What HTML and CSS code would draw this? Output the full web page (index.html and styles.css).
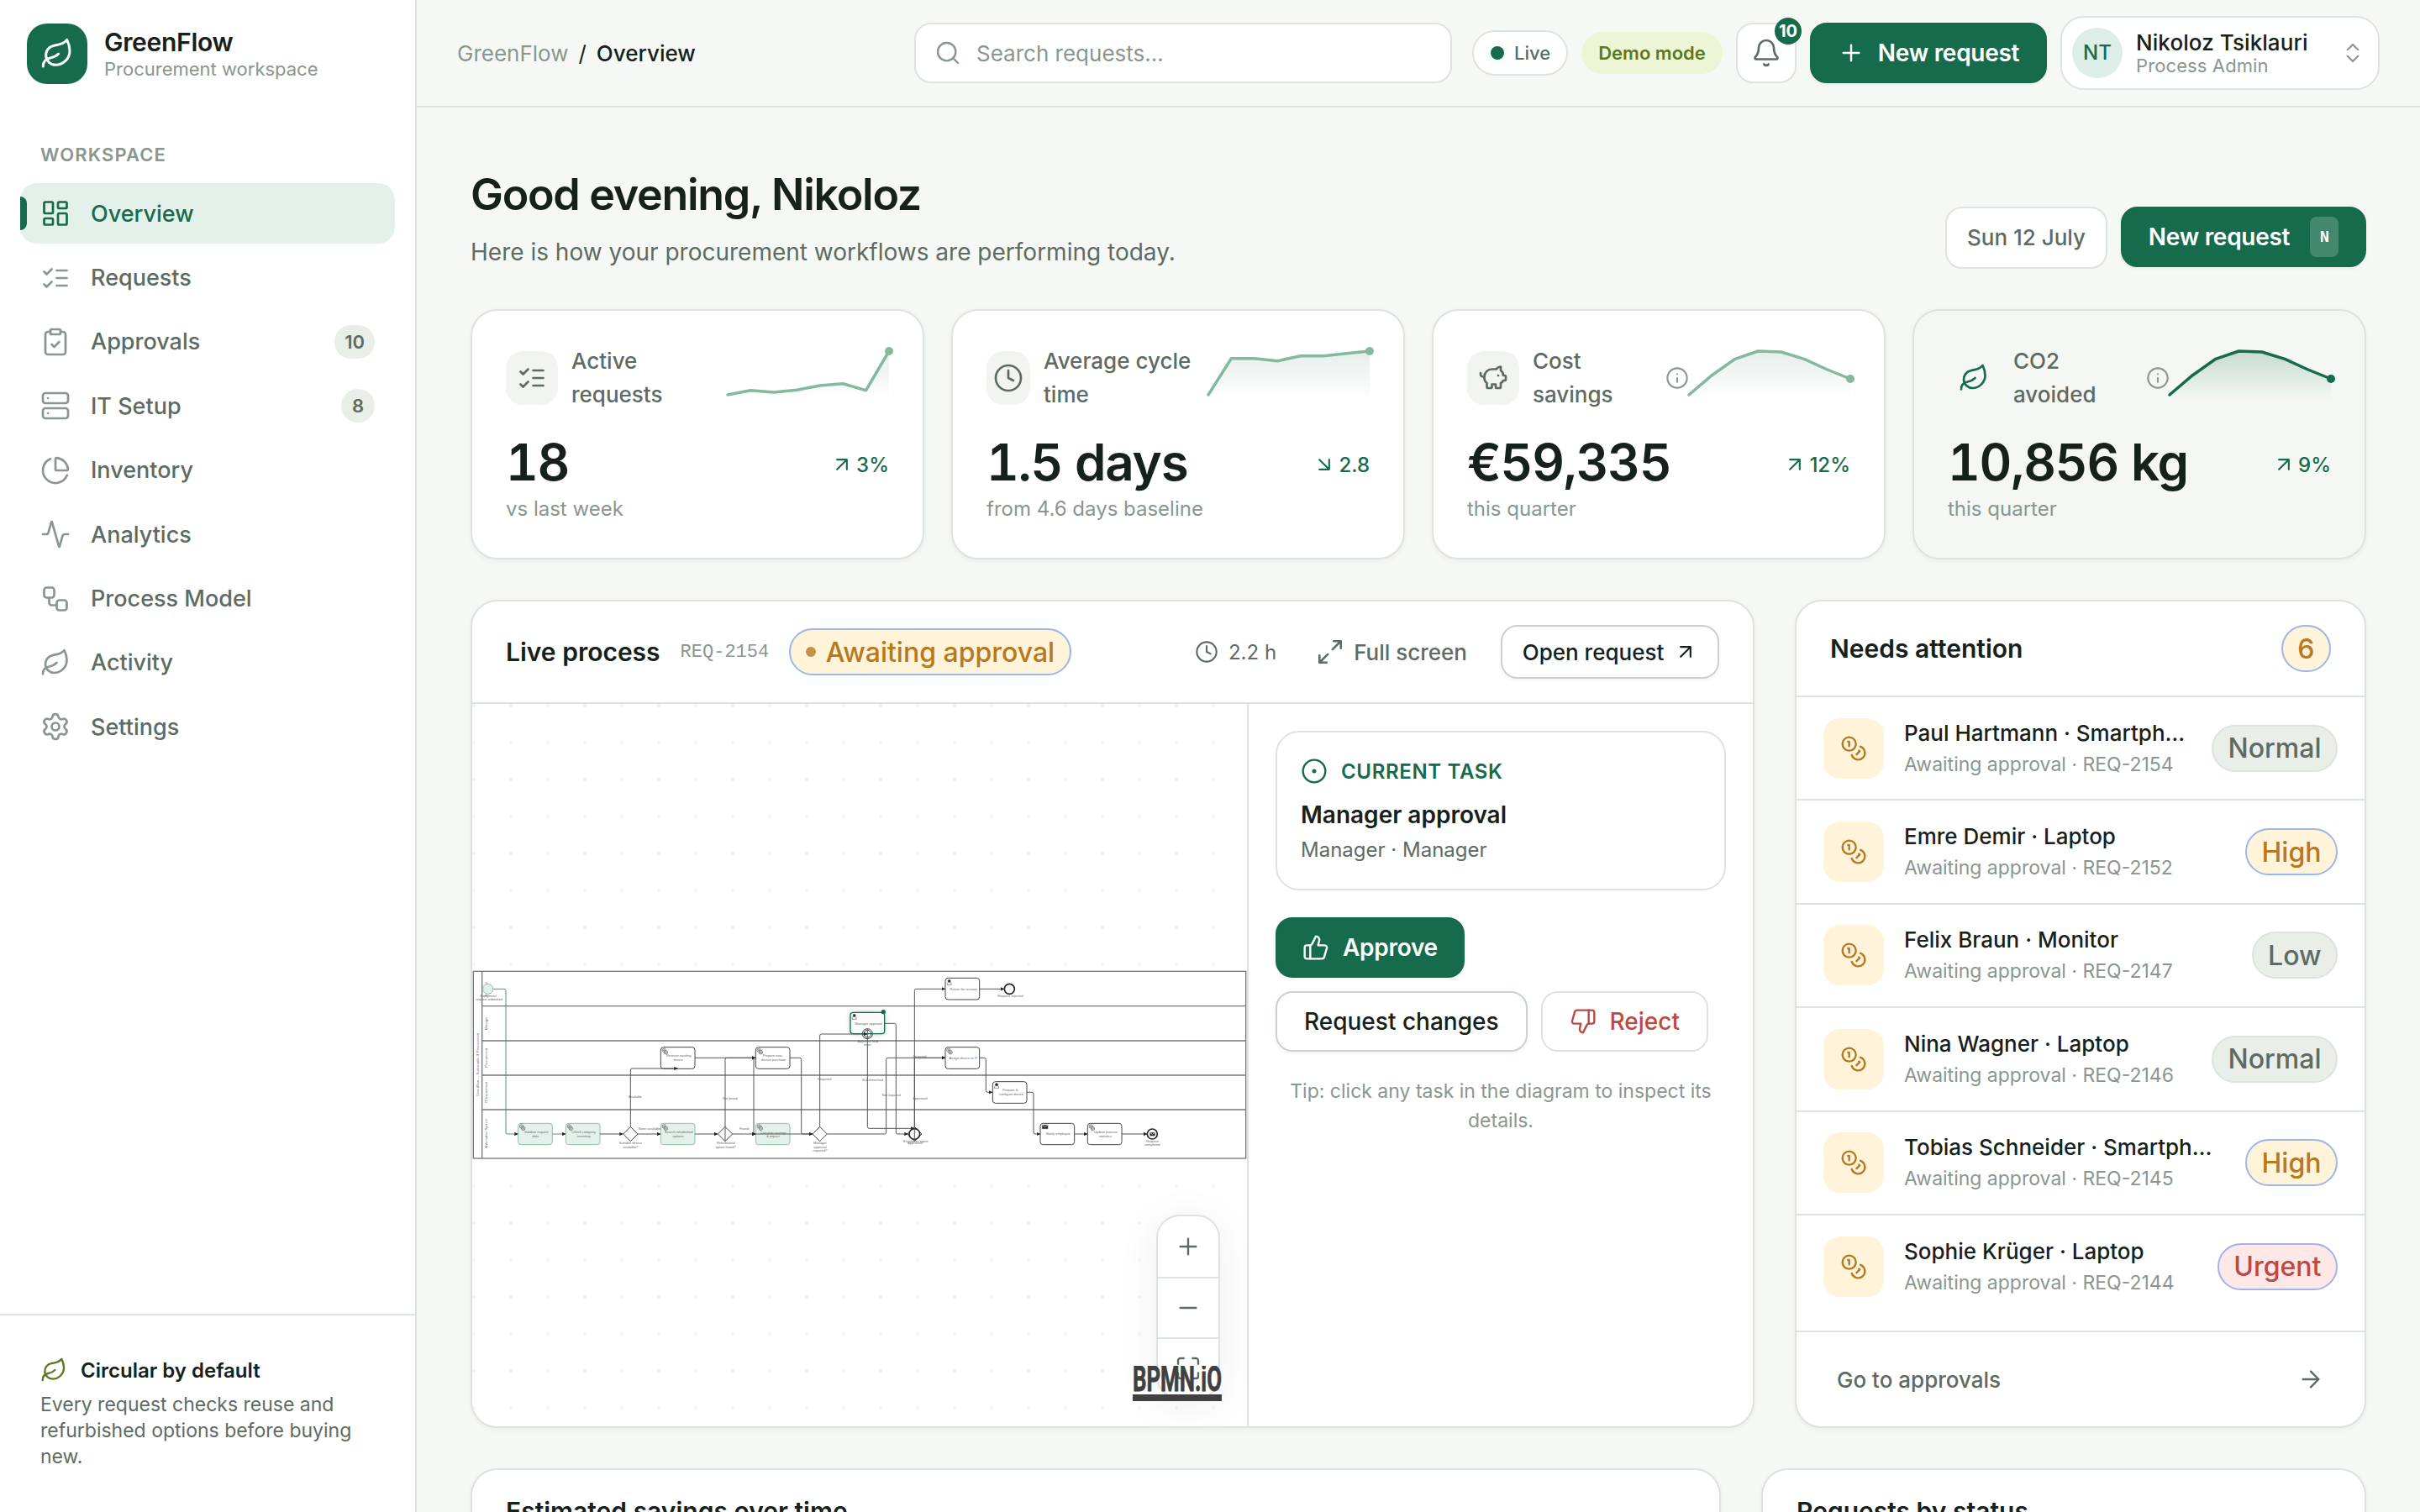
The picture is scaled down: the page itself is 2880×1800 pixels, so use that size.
FILE: index.html
```html
<!DOCTYPE html>
<html lang="en">
<head>
    <meta charset="UTF-8">
    <meta name="viewport" content="width=device-width, initial-scale=1.0">
    <title>GreenFlow - Overview</title>
    <link rel="stylesheet" href="styles.css">
</head>
<body>
    <svg class="sprite" xmlns="http://www.w3.org/2000/svg">
        <symbol id="leaf" viewBox="0 0 24 24"><path d="M11 20A7 7 0 0 1 9.8 6.1C15.5 5 17 4.48 19 2c1 2 2 4.18 2 8 0 5.5-4.78 10-10 10Z"/><path d="M2 21c0-3 1.85-5.36 5.08-6C9.5 14.52 12 13 13 12"/></symbol>
        <symbol id="dashboard" viewBox="0 0 24 24"><rect x="3" y="3" width="7" height="9" rx="1"/><rect x="14" y="3" width="7" height="5" rx="1"/><rect x="14" y="12" width="7" height="9" rx="1"/><rect x="3" y="16" width="7" height="5" rx="1"/></symbol>
        <symbol id="checks" viewBox="0 0 24 24"><path d="m3 17 2 2 4-4M3 7l2 2 4-4M13 6h8M13 12h8M13 18h8"/></symbol>
        <symbol id="clipboard" viewBox="0 0 24 24"><rect x="8" y="2" width="8" height="4" rx="1"/><path d="M16 4h2a2 2 0 0 1 2 2v14a2 2 0 0 1-2 2H6a2 2 0 0 1-2-2V6a2 2 0 0 1 2-2h2"/><path d="m9 14 2 2 4-4"/></symbol>
        <symbol id="server" viewBox="0 0 24 24"><rect x="2" y="2" width="20" height="8" rx="2"/><rect x="2" y="14" width="20" height="8" rx="2"/><path d="M6 6h.01M6 18h.01"/></symbol>
        <symbol id="pie" viewBox="0 0 24 24"><path d="M21 12c.552 0 1.005-.449.95-.998a10 10 0 0 0-8.953-8.951c-.55-.055-.998.398-.998.95v8a1 1 0 0 0 1 1z"/><path d="M21.21 15.89A10 10 0 1 1 8 2.83"/></symbol>
        <symbol id="pulse" viewBox="0 0 24 24"><path d="M22 12h-2.48a2 2 0 0 0-1.93 1.46l-2.35 8.36a.25.25 0 0 1-.48 0L9.24 2.18a.25.25 0 0 0-.48 0l-2.35 8.36A2 2 0 0 1 4.49 12H2"/></symbol>
        <symbol id="workflow" viewBox="0 0 24 24"><rect x="3" y="3" width="8" height="8" rx="2"/><path d="M7 11v4a2 2 0 0 0 2 2h4"/><rect x="13" y="13" width="8" height="8" rx="2"/></symbol>
        <symbol id="gear" viewBox="0 0 24 24"><path d="M9.671 4.136a2.34 2.34 0 0 1 4.659 0 2.34 2.34 0 0 0 3.319 1.915 2.34 2.34 0 0 1 2.33 4.033 2.34 2.34 0 0 0 0 3.831 2.34 2.34 0 0 1-2.33 4.033 2.34 2.34 0 0 0-3.319 1.915 2.34 2.34 0 0 1-4.659 0 2.34 2.34 0 0 0-3.32-1.915 2.34 2.34 0 0 1-2.33-4.033 2.34 2.34 0 0 0 0-3.831A2.34 2.34 0 0 1 6.35 6.051a2.34 2.34 0 0 0 3.319-1.915"/><circle cx="12" cy="12" r="3"/></symbol>
        <symbol id="search" viewBox="0 0 24 24"><circle cx="11" cy="11" r="8"/><path d="m21 21-4.34-4.34"/></symbol>
        <symbol id="bell" viewBox="0 0 24 24"><path d="M10.268 21a2 2 0 0 0 3.464 0"/><path d="M3.262 15.326A1 1 0 0 0 4 17h16a1 1 0 0 0 .74-1.673C19.41 13.956 18 12.499 18 8A6 6 0 0 0 6 8c0 4.499-1.411 5.956-2.738 7.326"/></symbol>
        <symbol id="plus" viewBox="0 0 24 24"><path d="M5 12h14M12 5v14"/></symbol>
        <symbol id="minus" viewBox="0 0 24 24"><path d="M5 12h14"/></symbol>
        <symbol id="updown" viewBox="0 0 24 24"><path d="m7 15 5 5 5-5M7 9l5-5 5 5"/></symbol>
        <symbol id="clock" viewBox="0 0 24 24"><circle cx="12" cy="12" r="10"/><path d="M12 6v6l4 2"/></symbol>
        <symbol id="piggy" viewBox="0 0 24 24"><path d="M11 17h3v2a1 1 0 0 0 1 1h2a1 1 0 0 0 1-1v-3a3.16 3.16 0 0 0 2-2h1a1 1 0 0 0 1-1v-2a1 1 0 0 0-1-1h-1a5 5 0 0 0-2-4V3a4 4 0 0 0-3.2 1.6l-.3.4H11a6 6 0 0 0-6 6v1a5 5 0 0 0 2 4v3a1 1 0 0 0 1 1h2a1 1 0 0 0 1-1z"/><path d="M16 10h.01M2 8v1a2 2 0 0 0 2 2h1"/></symbol>
        <symbol id="info" viewBox="0 0 24 24"><circle cx="12" cy="12" r="10"/><path d="M12 16v-4M12 8h.01"/></symbol>
        <symbol id="up-right" viewBox="0 0 24 24"><path d="M7 7h10v10M7 17 17 7"/></symbol>
        <symbol id="down-right" viewBox="0 0 24 24"><path d="m7 7 10 10M17 7v10H7"/></symbol>
        <symbol id="expand" viewBox="0 0 24 24"><path d="M15 3h6v6M21 3l-7 7M3 21l7-7M9 21H3v-6"/></symbol>
        <symbol id="fit" viewBox="0 0 24 24"><path d="M8 3H5a2 2 0 0 0-2 2v3M21 8V5a2 2 0 0 0-2-2h-3M3 16v3a2 2 0 0 0 2 2h3M16 21h3a2 2 0 0 0 2-2v-3"/></symbol>
        <symbol id="target" viewBox="0 0 24 24"><circle cx="12" cy="12" r="10"/><circle cx="12" cy="12" r="1"/></symbol>
        <symbol id="thumb-up" viewBox="0 0 24 24"><path d="M7 10v12"/><path d="M15 5.88 14 10h5.83a2 2 0 0 1 1.92 2.56l-2.33 8A2 2 0 0 1 17.5 22H4a2 2 0 0 1-2-2v-8a2 2 0 0 1 2-2h2.76a2 2 0 0 0 1.79-1.11L12 2a3.13 3.13 0 0 1 3 3.88Z"/></symbol>
        <symbol id="thumb-down" viewBox="0 0 24 24"><path d="M17 14V2"/><path d="M9 18.12 10 14H4.17a2 2 0 0 1-1.92-2.56l2.33-8A2 2 0 0 1 6.5 2H20a2 2 0 0 1 2 2v8a2 2 0 0 1-2 2h-2.76a2 2 0 0 0-1.79 1.11L12 22a3.13 3.13 0 0 1-3-3.88Z"/></symbol>
        <symbol id="coins" viewBox="0 0 24 24"><circle cx="8" cy="8" r="6"/><path d="M18.09 10.37A6 6 0 1 1 10.34 18M7 6h1v4M16.71 13.88l.7.71-2.82 2.82"/></symbol>
        <symbol id="arrow-right" viewBox="0 0 24 24"><path d="M5 12h14M12 5l7 7-7 7"/></symbol>
        <symbol id="service" viewBox="0 0 24 24"><g fill="#fff"><circle cx="9" cy="8" r="6"/><circle cx="9" cy="8" r="2"/><circle cx="15" cy="15" r="6"/><circle cx="15" cy="15" r="2.5"/></g></symbol>
        <symbol id="person" viewBox="0 0 24 24"><path d="M4 22v-6c0-2 3-4 5-4h6c2 0 5 2 5 4v6z" fill="#fff"/><circle cx="12" cy="7" r="5" fill="#22242a"/></symbol>
    </svg>

    <aside class="sidebar">
        <div class="brand">
            <div class="brand-mark"><svg class="icon i-40"><use href="#leaf"/></svg></div>
            <div>
                <div class="brand-name">GreenFlow</div>
                <div class="brand-sub">Procurement workspace</div>
            </div>
        </div>
        <nav class="nav">
            <div class="nav-title">WORKSPACE</div>
            <a class="nav-item active"><svg class="icon i-36"><use href="#dashboard"/></svg><span>Overview</span></a>
            <a class="nav-item"><svg class="icon i-36"><use href="#checks"/></svg><span>Requests</span></a>
            <a class="nav-item"><svg class="icon i-36"><use href="#clipboard"/></svg><span>Approvals</span><b class="count">10</b></a>
            <a class="nav-item"><svg class="icon i-36"><use href="#server"/></svg><span>IT Setup</span><b class="count">8</b></a>
            <a class="nav-item"><svg class="icon i-36"><use href="#pie"/></svg><span>Inventory</span></a>
            <a class="nav-item"><svg class="icon i-36"><use href="#pulse"/></svg><span>Analytics</span></a>
            <a class="nav-item"><svg class="icon i-36"><use href="#workflow"/></svg><span>Process Model</span></a>
            <a class="nav-item"><svg class="icon i-36"><use href="#leaf"/></svg><span>Activity</span></a>
            <a class="nav-item"><svg class="icon i-36"><use href="#gear"/></svg><span>Settings</span></a>
        </nav>
        <div class="side-note">
            <div class="side-note-title"><svg class="icon i-32"><use href="#leaf"/></svg>Circular by default</div>
            <p>Every request checks reuse and refurbished options before buying new.</p>
        </div>
    </aside>

    <div class="page">
        <header class="topbar">
            <div class="crumbs"><span>GreenFlow</span><i>/</i><b>Overview</b></div>
            <div class="search"><svg class="icon i-32"><use href="#search"/></svg>Search requests...</div>
            <div class="live"><span class="live-dot"></span>Live</div>
            <div class="demo">Demo mode</div>
            <div class="bell"><svg class="icon i-36"><use href="#bell"/></svg><span class="bell-count">10</span></div>
            <button class="btn primary top-new"><svg class="icon i-32"><use href="#plus"/></svg>New request</button>
            <div class="user">
                <div class="avatar">NT</div>
                <div class="user-text">
                    <div class="user-name">Nikoloz Tsiklauri</div>
                    <div class="user-role">Process Admin</div>
                </div>
                <svg class="icon i-30"><use href="#updown"/></svg>
            </div>
        </header>

        <main class="content">
            <section class="hero">
                <div>
                    <h1>Good evening, Nikoloz</h1>
                    <p>Here is how your procurement workflows are performing today.</p>
                </div>
                <div class="hero-actions">
                    <div class="date">Sun 12 July</div>
                    <button class="btn primary hero-new">New request <kbd>N</kbd></button>
                </div>
            </section>

            <section class="stats">
                <div class="card stat">
                    <div class="stat-head">
                        <div class="stat-icon"><svg class="icon i-36"><use href="#checks"/></svg></div>
                        <div class="stat-label">Active requests</div>
                        <svg class="spark" viewBox="0 0 200 70">
                            <defs><linearGradient id="fade" x1="0" y1="0" x2="0" y2="1"><stop offset="0" stop-color="#176b4d" stop-opacity=".11"/><stop offset="1" stop-color="#176b4d" stop-opacity="0"/></linearGradient></defs>
                            <path class="area" d="M8 55L35.4 49.7L62.9 52L90.3 49.3L117.7 44L145.1 41.7L172.6 49.7L200 3V61H8Z"/>
                            <path class="line" d="M8 55L35.4 49.7L62.9 52L90.3 49.3L117.7 44L145.1 41.7L172.6 49.7L200 3"/>
                            <circle cx="200" cy="3" r="5"/>
                        </svg>
                    </div>
                    <div class="stat-row"><div class="stat-value">18</div><div class="delta"><svg class="icon i-28"><use href="#up-right"/></svg>3%</div></div>
                    <div class="stat-foot">vs last week</div>
                </div>
                <div class="card stat">
                    <div class="stat-head">
                        <div class="stat-icon narrow"><svg class="icon i-36"><use href="#clock"/></svg></div>
                        <div class="stat-label">Average cycle time</div>
                        <svg class="spark" viewBox="0 0 200 70">
                            <path class="area" d="M8 55L35.4 11.7L62.9 11.7L90.3 14.7L117.7 8.7L145.1 8.7L172.6 5.7L200 3V61H8Z"/>
                            <path class="line" d="M8 55L35.4 11.7L62.9 11.7L90.3 14.7L117.7 8.7L145.1 8.7L172.6 5.7L200 3"/>
                            <circle cx="200" cy="3" r="5"/>
                        </svg>
                    </div>
                    <div class="stat-row"><div class="stat-value">1.5 days</div><div class="delta"><svg class="icon i-28"><use href="#down-right"/></svg>2.8</div></div>
                    <div class="stat-foot">from 4.6 days baseline</div>
                </div>
                <div class="card stat">
                    <div class="stat-head">
                        <div class="stat-icon"><svg class="icon i-36"><use href="#piggy"/></svg></div>
                        <div class="stat-label">Cost savings</div>
                        <svg class="icon i-28 info"><use href="#info"/></svg>
                        <svg class="spark" viewBox="0 0 200 70">
                            <path class="area" d="M8 55L35.4 31.7L62.9 12.3L90.3 3L117.7 4L145.1 12.3L172.6 25L200 36V61H8Z"/>
                            <path class="line" d="M8 55L35.4 31.7L62.9 12.3L90.3 3L117.7 4L145.1 12.3L172.6 25L200 36"/>
                            <circle cx="200" cy="36" r="5"/>
                        </svg>
                    </div>
                    <div class="stat-row"><div class="stat-value">€59,335</div><div class="delta"><svg class="icon i-28"><use href="#up-right"/></svg>12%</div></div>
                    <div class="stat-foot">this quarter</div>
                </div>
                <div class="card stat eco">
                    <div class="stat-head">
                        <div class="stat-icon"><svg class="icon i-36"><use href="#leaf"/></svg></div>
                        <div class="stat-label">CO2 avoided</div>
                        <svg class="icon i-28 info"><use href="#info"/></svg>
                        <svg class="spark" viewBox="0 0 200 70">
                            <defs><linearGradient id="fade-eco" x1="0" y1="0" x2="0" y2="1"><stop offset="0" stop-color="#176b4d" stop-opacity=".2"/><stop offset="1" stop-color="#176b4d" stop-opacity="0"/></linearGradient></defs>
                            <path class="area" d="M8 55L35.4 31.7L62.9 12.3L90.3 3L117.7 4L145.1 12.3L172.6 25L200 36V61H8Z"/>
                            <path class="line" d="M8 55L35.4 31.7L62.9 12.3L90.3 3L117.7 4L145.1 12.3L172.6 25L200 36"/>
                            <circle cx="200" cy="36" r="5"/>
                        </svg>
                    </div>
                    <div class="stat-row"><div class="stat-value">10,856 kg</div><div class="delta"><svg class="icon i-28"><use href="#up-right"/></svg>9%</div></div>
                    <div class="stat-foot">this quarter</div>
                </div>
            </section>

            <section class="middle">
                <div class="card live-card">
                    <div class="live-head">
                        <h2>Live process</h2>
                        <code>REQ-2154</code>
                        <span class="pill amber"><i class="pill-dot"></i>Awaiting approval</span>
                        <span class="age"><svg class="icon i-28"><use href="#clock"/></svg>2.2 h</span>
                        <span class="full"><svg class="icon i-34"><use href="#expand"/></svg>Full screen</span>
                        <button class="btn open">Open request<svg class="icon i-28"><use href="#up-right"/></svg></button>
                    </div>
                    <div class="live-body">
                        <div class="canvas">
                            <svg class="bpmn" viewBox="36 30 2766 708">
                                <defs>
                                    <marker id="tip" viewBox="0 0 12 12" refX="12" refY="6" markerWidth="13" markerHeight="13" markerUnits="userSpaceOnUse" orient="auto"><path d="M0 0L12 6L0 12Z" fill="#22242a"/></marker>
                                </defs>
                                <g class="lanes">
                                    <rect x="40" y="49" width="2758" height="668"/>
                                    <path d="M71 49V717M71 173H2798M71 297H2798M71 420H2798M71 543H2798"/>
                                </g>
                                <g class="vlabels">
                                    <text transform="translate(60 383) rotate(-90)">GreenFlow — Sustainable IT Procurement</text>
                                    <text transform="translate(90 112) rotate(-90)">Employee</text>
                                    <text transform="translate(90 235) rotate(-90)">Manager</text>
                                    <text transform="translate(90 358) rotate(-90)">Procurement</text>
                                    <text transform="translate(90 481) rotate(-90)">IT Department</text>
                                    <text transform="translate(90 628) rotate(-90)">Automation System</text>
                                </g>
                                <g class="shape done">
                                    <circle cx="92" cy="112" r="18"/>
                                    <rect x="200" y="592" width="122" height="76" rx="10"/>
                                    <rect x="370" y="592" width="122" height="76" rx="10"/>
                                    <rect x="709" y="592" width="122" height="76" rx="10"/>
                                    <rect x="1048" y="592" width="122" height="76" rx="10"/>
                                </g>
                                <rect class="glow" x="1386" y="196" width="122" height="76" rx="10"/>
                                <g class="shape">
                                    <rect x="709" y="320" width="122" height="77" rx="10"/>
                                    <rect x="1048" y="320" width="122" height="77" rx="10"/>
                                    <rect x="1725" y="73" width="122" height="77" rx="10"/>
                                    <rect x="1725" y="320" width="122" height="77" rx="10"/>
                                    <rect x="1894" y="443" width="122" height="77" rx="10"/>
                                    <rect x="2064" y="592" width="122" height="76" rx="10"/>
                                    <rect x="2233" y="592" width="122" height="76" rx="10"/>
                                    <path d="M575 630L601 604L627 630L601 656ZM913 630L939 604L965 630L939 656ZM1251 630L1277 604L1303 630L1277 656ZM1589 630L1615 604L1641 630L1615 656Z"/>
                                    <circle cx="1447" cy="272" r="18"/><circle cx="1447" cy="272" r="13"/>
                                    <circle class="end" cx="1954" cy="112" r="18"/>
                                    <circle class="end" cx="1615" cy="630" r="19"/>
                                    <circle class="end" cx="2464" cy="630" r="18"/>
                                </g>
                                <rect class="current" x="1386" y="196" width="122" height="76" rx="10"/>
                                <circle cx="1504" cy="194" r="8" fill="#176b4d"/>
                                <g class="flow past">
                                    <path d="M111 112H150Q156 112 156 118V624Q156 630 162 630H200"/>
                                    <path d="M323 630H370"/>
                                </g>
                                <g class="flow">
                                    <path d="M492 630H575"/>
                                    <path d="M627 630H709"/>
                                    <path d="M601 604V402Q601 396 607 396H770"/>
                                    <path d="M831 358H1048"/>
                                    <path d="M831 630H913"/>
                                    <path d="M939 656V364Q939 358 945 358H1048"/>
                                    <path d="M1041 358V630H1048"/>
                                    <path d="M965 630H1048"/>
                                    <path d="M1048 630H1251"/>
                                    <path d="M1170 358H1205Q1211 358 1211 364V624Q1211 630 1217 630H1251"/>
                                    <path d="M1277 604V279Q1277 273 1283 273H1447"/>
                                    <path d="M1303 630H1508Q1514 630 1514 624V364Q1514 358 1520 358H1725"/>
                                    <path d="M1508 235H1543Q1549 235 1549 241V624Q1549 630 1555 630H1592"/>
                                    <path d="M1447 254V604Q1447 610 1453 610H1615"/>
                                    <path d="M1615 656V118Q1615 112 1621 112H1725"/>
                                    <path d="M1615 604V358H1725"/>
                                    <path d="M1847 112H1936"/>
                                    <path d="M1847 358H1864Q1870 358 1870 364V475Q1870 481 1876 481H1894"/>
                                    <path d="M2016 481H2034Q2040 481 2040 487V624Q2040 630 2046 630H2064"/>
                                    <path d="M2186 630H2233"/>
                                    <path d="M2355 630H2446"/>
                                </g>
                                <g class="marks">
                                    <use href="#service" x="202" y="594" width="26" height="26"/>
                                    <use href="#service" x="372" y="594" width="26" height="26"/>
                                    <use href="#service" x="711" y="594" width="26" height="26"/>
                                    <use href="#service" x="1050" y="594" width="26" height="26"/>
                                    <use href="#service" x="711" y="322" width="26" height="26"/>
                                    <use href="#service" x="1050" y="322" width="26" height="26"/>
                                    <use href="#service" x="1727" y="322" width="26" height="26"/>
                                    <use href="#service" x="2235" y="594" width="26" height="26"/>
                                    <use href="#person" x="1389" y="200" width="22" height="22"/>
                                    <use href="#person" x="1728" y="77" width="22" height="22"/>
                                    <use href="#person" x="1897" y="447" width="22" height="22"/>
                                    <path d="M2071 598h20v13h-20zM2456 625h17v11h-17z" fill="#22242a"/>
                                    <path d="m2071 598 10 7 10-7M2456 625l8.500 6 8.500-6" stroke="#fff"/>
                                </g>
                                <g class="labels">
                                    <text x="94" y="141">Equipment</text><text x="96" y="153">request submitted</text>
                                    <text x="265" y="627">Validate request</text><text x="262" y="641">data</text>
                                    <text x="434" y="627">Check company</text><text x="434" y="641">inventory</text>
                                    <text x="601" y="666">Suitable device</text><text x="601" y="681">available?</text>
                                    <text x="669" y="615">None available</text>
                                    <text x="773" y="627">Search refurbished</text><text x="771" y="641">options</text>
                                    <text x="773" y="354">Reserve existing</text><text x="771" y="369">device</text>
                                    <text x="618" y="501">Available</text>
                                    <text x="957" y="507">Not found</text>
                                    <text x="1007" y="615">Found</text>
                                    <text x="941" y="666">Refurbished</text><text x="941" y="681">option found?</text>
                                    <text x="1109" y="354">Prepare new-</text><text x="1112" y="369">device purchase</text>
                                    <text x="1110" y="629">Calculate savings</text><text x="1110" y="642">&amp; impact</text>
                                    <text x="1278" y="666">Manager</text><text x="1278" y="681">approval</text><text x="1278" y="693">required?</text>
                                    <text x="1294" y="438">Required</text>
                                    <text x="1451" y="240">Manager approval</text>
                                    <text x="1449" y="302">Approval SLA</text><text x="1447" y="315">timer</text>
                                    <text x="1465" y="441">SLA breached</text>
                                    <text x="1532" y="495">Not required</text>
                                    <text x="1633" y="357">Rejected</text>
                                    <text x="1635" y="507">Approved</text>
                                    <text x="1619" y="660">Escalation event</text><text x="1619" y="665">Approved?</text>
                                    <text x="1790" y="117">Return for revision</text>
                                    <text x="1957" y="141">Request rejected</text>
                                    <text x="1789" y="363">Assign device to IT</text>
                                    <text x="1957" y="477">Prepare &amp;</text><text x="1960" y="492">configure device</text>
                                    <text x="2128" y="633">Notify employee</text>
                                    <text x="2298" y="627">Update process</text><text x="2296" y="641">statistics</text>
                                    <text x="2464" y="660">Request</text><text x="2464" y="672">completed</text>
                                </g>
                            </svg>
                            <div class="zoom">
                                <button><svg class="icon i-32"><use href="#plus"/></svg></button>
                                <button><svg class="icon i-32"><use href="#minus"/></svg></button>
                                <button><svg class="icon i-32"><use href="#fit"/></svg></button>
                            </div>
                            <svg class="bpmn-logo" viewBox="0 0 106 42">
                                <text x="0" y="30" textLength="106" lengthAdjust="spacingAndGlyphs">BPMN.iO</text>
                                <rect y="34" width="106" height="8"/>
                            </svg>
                        </div>
                        <div class="task-side">
                            <div class="task">
                                <div class="task-tag"><svg class="icon i-32"><use href="#target"/></svg>CURRENT TASK</div>
                                <div class="task-name">Manager approval</div>
                                <div class="task-who">Manager · Manager</div>
                            </div>
                            <div class="task-actions">
                                <button class="btn primary"><svg class="icon i-32"><use href="#thumb-up"/></svg>Approve</button>
                                <button class="btn">Request changes</button>
                                <button class="btn danger"><svg class="icon i-32"><use href="#thumb-down"/></svg>Reject</button>
                            </div>
                            <p class="tip">Tip: click any task in the diagram to inspect its details.</p>
                        </div>
                    </div>
                </div>

                <div class="card attention">
                    <div class="att-head"><h2>Needs attention</h2><span class="pill amber">6</span></div>
                    <div class="att-list">
                        <div class="att-row"><div class="att-icon"><svg class="icon i-32"><use href="#coins"/></svg></div><div class="att-text"><div class="att-name">Paul Hartmann · Smartphone</div><div class="att-sub">Awaiting approval · REQ-2154</div></div><span class="pill">Normal</span></div>
                        <div class="att-row"><div class="att-icon"><svg class="icon i-32"><use href="#coins"/></svg></div><div class="att-text"><div class="att-name">Emre Demir · Laptop</div><div class="att-sub">Awaiting approval · REQ-2152</div></div><span class="pill amber">High</span></div>
                        <div class="att-row"><div class="att-icon"><svg class="icon i-32"><use href="#coins"/></svg></div><div class="att-text"><div class="att-name">Felix Braun · Monitor</div><div class="att-sub">Awaiting approval · REQ-2147</div></div><span class="pill">Low</span></div>
                        <div class="att-row"><div class="att-icon"><svg class="icon i-32"><use href="#coins"/></svg></div><div class="att-text"><div class="att-name">Nina Wagner · Laptop</div><div class="att-sub">Awaiting approval · REQ-2146</div></div><span class="pill">Normal</span></div>
                        <div class="att-row"><div class="att-icon"><svg class="icon i-32"><use href="#coins"/></svg></div><div class="att-text"><div class="att-name">Tobias Schneider · Smartphone</div><div class="att-sub">Awaiting approval · REQ-2145</div></div><span class="pill amber">High</span></div>
                        <div class="att-row"><div class="att-icon"><svg class="icon i-32"><use href="#coins"/></svg></div><div class="att-text"><div class="att-name">Sophie Krüger · Laptop</div><div class="att-sub">Awaiting approval · REQ-2144</div></div><span class="pill red">Urgent</span></div>
                    </div>
                    <div class="att-foot">Go to approvals<svg class="icon i-32"><use href="#arrow-right"/></svg></div>
                </div>
            </section>

            <section class="bottom">
                <div class="card chart-card"><h2>Estimated savings over time</h2></div>
                <div class="card chart-card"><h2>Requests by status</h2></div>
            </section>
        </main>
    </div>
</body>
</html>
```

FILE: styles.css
```css
* {
    box-sizing: border-box;
}
body {
    margin: 0;
    width: 2880px;
    height: 1800px;
    overflow: hidden;
    display: flex;
    background: #f6f8f5;
    color: #16211c;
    font-family: Inter, "Liberation Sans", sans-serif;
    font-size: 26px;
}
h1, h2, p {
    margin: 0;
}
.sprite {
    display: none;
}
.icon {
    flex: none;
    fill: none;
    stroke: currentColor;
    stroke-width: 1.8;
    stroke-linecap: round;
    stroke-linejoin: round;
}
.i-28 { width: 28px; height: 28px; }
.i-30 { width: 30px; height: 30px; }
.i-32 { width: 32px; height: 32px; }
.i-34 { width: 34px; height: 34px; }
.i-36 { width: 36px; height: 36px; }
.i-40 { width: 40px; height: 40px; }

/* sidebar */
.sidebar {
    width: 496px;
    flex: none;
    display: flex;
    flex-direction: column;
    background: #fff;
    border-right: 2px solid #dde3de;
}
.brand {
    display: flex;
    align-items: center;
    gap: 20px;
    height: 128px;
    padding: 0 32px;
}
.brand-mark {
    width: 72px;
    height: 72px;
    display: flex;
    align-items: center;
    justify-content: center;
    border-radius: 24px;
    background: #176b4d;
    color: #fff;
}
.brand-name {
    font-size: 30px;
    line-height: 36px;
    font-weight: 600;
    letter-spacing: -0.01em;
}
.brand-sub {
    font-size: 22px;
    line-height: 28px;
    color: #8a968f;
}
.nav {
    flex: 1;
    display: flex;
    flex-direction: column;
    gap: 4px;
    padding: 40px 24px 0;
}
.nav-title {
    padding-left: 24px;
    height: 46px;
    line-height: 32px;
    font-size: 22px;
    font-weight: 600;
    letter-spacing: 0.05em;
    color: #8a968f;
}
.nav-item {
    position: relative;
    display: flex;
    align-items: center;
    gap: 24px;
    height: 72.4px;
    padding: 0 24px;
    border-radius: 20px;
    font-size: 27px;
    font-weight: 500;
    color: #5d6b63;
}
.nav-item .icon {
    color: #8a968f;
}
.nav-item.active,
.nav-item.active .icon {
    color: #176b4d;
}
.nav-item.active {
    background: #e4f1eb;
}
.nav-item.active::before {
    content: "";
    position: absolute;
    left: 0;
    top: 16px;
    width: 8px;
    height: 40px;
    border-radius: 0 8px 8px 0;
    background: #176b4d;
}
.count {
    margin-left: auto;
    min-width: 40px;
    height: 40px;
    line-height: 40px;
    padding: 0 12px;
    border-radius: 20px;
    background: #e9eee9;
    font-size: 22px;
    font-weight: 600;
    text-align: center;
}
.side-note {
    height: 236px;
    padding: 46px 40px 0 48px;
    border-top: 2px solid #dde3de;
    color: #5d6b63;
    font-size: 23px;
    line-height: 31px;
}
.side-note-title {
    display: flex;
    align-items: center;
    gap: 16px;
    height: 38px;
    margin-bottom: 7px;
    font-size: 24px;
    font-weight: 600;
    color: #16211c;
}
.side-note-title .icon {
    color: #5b7a1f;
}

/* top bar */
.page {
    flex: 1;
    min-width: 0;
    display: flex;
    flex-direction: column;
    overflow: hidden;
}
.topbar {
    height: 128px;
    flex: none;
    display: flex;
    align-items: center;
    gap: 16px;
    padding: 0 48px;
    border-bottom: 2px solid #dde3de;
}
.crumbs {
    display: flex;
    gap: 12px;
    margin-right: auto;
}
.crumbs span {
    color: #8a968f;
}
.crumbs i {
    font-style: normal;
}
.crumbs b {
    font-weight: 500;
}
.search {
    width: 640px;
    height: 72px;
    margin-right: 8px;
    display: flex;
    align-items: center;
    gap: 18px;
    padding: 0 22px;
    border: 2px solid #dde3de;
    border-radius: 20px;
    background: #fff;
    color: #8a968f;
}
.live {
    display: flex;
    align-items: center;
    gap: 12px;
    width: 114px;
    height: 54px;
    padding-left: 20px;
    border: 2px solid #dde3de;
    border-radius: 27px;
    background: #fff;
    font-size: 22px;
    font-weight: 500;
    color: #5d6b63;
}
.live-dot {
    width: 16px;
    height: 16px;
    border-radius: 50%;
    background: #176b4d;
    box-shadow: 0 0 0 6px rgba(23, 107, 77, 0.02);
}
.demo {
    width: 168px;
    height: 50px;
    line-height: 50px;
    border-radius: 25px;
    background: #ecf5d6;
    color: #5b7a1f;
    font-size: 22px;
    font-weight: 600;
    text-align: center;
}
.bell {
    position: relative;
    width: 72px;
    height: 72px;
    display: flex;
    align-items: center;
    justify-content: center;
    border: 2px solid #dde3de;
    border-radius: 20px;
    background: #fff;
    color: #5d6b63;
}
.bell-count {
    position: absolute;
    top: -8px;
    right: -8px;
    width: 32px;
    height: 32px;
    line-height: 32px;
    border-radius: 50%;
    background: #176b4d;
    color: #fff;
    font-size: 20px;
    font-weight: 700;
    text-align: center;
}
.btn {
    height: 72px;
    display: flex;
    align-items: center;
    justify-content: center;
    gap: 16px;
    padding: 0 32px;
    border: 2px solid #c9d2cb;
    border-radius: 20px;
    background: #fff;
    color: #16211c;
    font-family: inherit;
    font-size: 28px;
    font-weight: 500;
    white-space: nowrap;
    box-shadow: 0 2px 4px rgba(22, 33, 28, 0.05);
}
.btn.primary {
    padding: 0 30px;
    border-color: #176b4d;
    background: #176b4d;
    color: #fff;
    font-weight: 600;
    letter-spacing: -0.01em;
}
.btn.danger {
    border-color: #dde3de;
    color: #bd4844;
    box-shadow: none;
}
.top-new {
    width: 282px;
}
.user {
    width: 380px;
    height: 88px;
    display: flex;
    align-items: center;
    gap: 16px;
    padding: 0 15px 0 12px;
    border: 2px solid #dde3de;
    border-radius: 28px;
    background: #fff;
}
.user .icon {
    color: #8a968f;
}
.user-text {
    flex: 1;
    padding-top: 1px;
}
.avatar {
    width: 60px;
    height: 60px;
    line-height: 60px;
    border-radius: 50%;
    background: #ddeee8;
    color: #176b4d;
    font-size: 24px;
    font-weight: 500;
    text-align: center;
}
.user-name {
    line-height: 28px;
    font-weight: 500;
    letter-spacing: 0.003em;
}
.user-role {
    font-size: 22px;
    line-height: 26px;
    letter-spacing: 0.005em;
    color: #8a968f;
}

/* content */
.content {
    padding: 72px 64px 0;
}
.hero {
    display: flex;
    justify-content: space-between;
    height: 168px;
}
.hero h1 {
    font-size: 52px;
    line-height: 64px;
    font-weight: 600;
    letter-spacing: -0.025em;
}
.hero p {
    margin-top: 16px;
    font-size: 28px;
    line-height: 40px;
    color: #5d6b63;
}
.hero-actions {
    display: flex;
    gap: 16px;
    align-items: flex-start;
    padding-top: 46px;
}
.date {
    width: 193px;
    height: 74px;
    line-height: 70px;
    border: 2px solid #dde3de;
    border-radius: 20px;
    background: #fff;
    color: #5d6b63;
    font-weight: 500;
    text-align: center;
}
.hero-new {
    width: 292px;
    gap: 24px;
}
.hero-new kbd {
    width: 34px;
    height: 48px;
    line-height: 48px;
    border-radius: 8px;
    background: rgba(255, 255, 255, 0.2);
    font-family: "DejaVu Sans Mono", monospace;
    font-size: 18px;
    font-weight: 700;
}
.card {
    border: 2px solid #dde3de;
    border-radius: 32px;
    background: #fff;
    box-shadow: 0 2px 6px rgba(22, 33, 28, 0.05);
}
.stats {
    display: grid;
    grid-template-columns: repeat(4, 1fr);
    gap: 32px;
}
.stat {
    height: 298px;
    padding: 40px;
}
.stat-head {
    display: flex;
    align-items: center;
    gap: 16px;
    height: 80px;
}
.stat-icon {
    width: 62px;
    height: 64px;
    flex: none;
    display: flex;
    align-items: center;
    justify-content: center;
    border-radius: 20px;
    background: #f1f4f1;
    color: #5d6b63;
}
.stat-icon.narrow {
    width: 52px;
}
.stat-label {
    flex: 1;
    line-height: 40px;
    font-weight: 500;
    color: #5d6b63;
}
.info {
    color: #8a968f;
    margin-right: -16px;
}
.spark {
    flex: none;
    width: 200px;
    height: 70px;
    margin-left: -8px;
    overflow: visible;
}
.area {
    fill: url(#fade);
}
.line {
    fill: none;
    stroke: #84b99f;
    stroke-width: 3.5;
    stroke-linejoin: round;
    stroke-linecap: round;
}
.spark circle {
    fill: #84b99f;
}
.eco {
    background: #f4f7f4;
}
.eco .stat-icon {
    background: none;
    color: #176b4d;
}
.eco .area {
    fill: url(#fade-eco);
}
.eco .line {
    stroke: #176b4d;
}
.eco .spark circle {
    fill: #176b4d;
}
.stat-row {
    display: flex;
    justify-content: space-between;
    align-items: center;
    height: 72px;
    margin-top: 24px;
}
.stat-value {
    font-size: 60px;
    line-height: 72px;
    font-weight: 600;
    font-variant-numeric: tabular-nums;
    letter-spacing: -0.02em;
}
.delta {
    display: flex;
    align-items: center;
    gap: 3px;
    padding-top: 6px;
    font-size: 24px;
    font-weight: 500;
    color: #176b4d;
}
.stat-foot {
    margin-top: 2px;
    font-size: 24px;
    line-height: 36px;
    color: #8a968f;
}

.middle {
    display: grid;
    grid-template-columns: 1528px 680px;
    gap: 48px;
    margin-top: 48px;
    height: 986px;
}
h2 {
    font-size: 30px;
    line-height: 40px;
    font-weight: 600;
}
.live-card {
    display: flex;
    flex-direction: column;
    overflow: hidden;
}
.live-head {
    height: 122px;
    display: flex;
    align-items: center;
    gap: 24px;
    padding: 0 40px;
    border-bottom: 2px solid #dde3de;
}
.live-head h2 {
    white-space: nowrap;
}
.live-head code {
    font-family: "Liberation Mono", monospace;
    font-size: 22px;
    color: #8a968f;
}
.pill {
    flex: none;
    height: 56px;
    display: inline-flex;
    align-items: center;
    padding: 0 17.5px;
    border: 2px solid #dde3de;
    border-radius: 28px;
    background: #e9eee9;
    color: #5d6b63;
    font-size: 32px;
    font-weight: 500;
}
.pill.amber {
    border-color: #9bb8e8;
    background: #fff3d9;
    color: #b87820;
}
.pill.red {
    border-color: #9fb4ea;
    background: #fde8e7;
    color: #bd4844;
}
.pill-dot {
    width: 12px;
    height: 12px;
    margin-right: 12px;
    border-radius: 50%;
    background: #c79145;
}
.age, .full {
    display: flex;
    align-items: center;
    gap: 11px;
    color: #5d6b63;
    white-space: nowrap;
}
.age {
    gap: 12px;
    margin-left: auto;
    font-size: 24px;
}
.full {
    margin: 0 16px 0 23px;
    font-weight: 500;
}
.btn.open {
    width: 260px;
    height: 64px;
    padding: 0;
    gap: 12px;
    font-size: 26px;
}
.live-body {
    flex: 1;
    display: flex;
    min-height: 0;
}
.canvas {
    position: relative;
    flex: 1;
    display: flex;
    align-items: center;
    background: radial-gradient(circle at 2px 2px, #f3f5f3 2px, transparent 2.5px) 0 0 / 44px 44px;
}

/* process diagram */
.bpmn {
    width: 922px;
    height: 236px;
}
.lanes rect, .lanes path {
    fill: none;
    stroke: #77787c;
    stroke-width: 4;
}
.lanes rect {
    fill: #fff;
}
.shape {
    fill: #fff;
    stroke: #44464c;
    stroke-width: 3;
}
.done {
    fill: #e4f1eb;
    stroke: #8cc2a8;
}
.end {
    stroke: #22242a;
    stroke-width: 5;
}
.glow {
    fill: #f9fcfa;
    filter: drop-shadow(0 0 10px rgba(23, 107, 77, 0.35));
}
.current {
    fill: none;
    stroke: #176b4d;
    stroke-width: 4;
}
.flow path {
    fill: none;
    stroke: #55575d;
    stroke-width: 3;
    marker-end: url(#tip);
}
.flow.past path {
    stroke: #4f947a;
}
.marks {
    fill: none;
    stroke: #55575d;
    stroke-width: 2;
}
.labels text, .vlabels text {
    fill: #66686c;
    font-family: "Liberation Sans", Arial, sans-serif;
    font-size: 12px;
    text-anchor: middle;
}
.zoom {
    position: absolute;
    right: 32px;
    bottom: 32px;
    width: 76px;
    border: 2px solid #dde3de;
    border-radius: 28px;
    background: #fff;
    box-shadow: 0 8px 48px rgba(22, 33, 28, 0.08);
}
.zoom button {
    width: 100%;
    height: 72px;
    display: flex;
    align-items: center;
    justify-content: center;
    padding: 0;
    border: 0;
    border-bottom: 2px solid #dde3de;
    background: none;
    color: #5d6b63;
}
.zoom button:first-child {
    height: 74px;
}
.zoom button:last-child {
    height: 70px;
    border-bottom: 0;
}
.bpmn-logo {
    position: absolute;
    right: 30px;
    bottom: 30px;
    width: 106px;
    height: 42px;
    fill: #404040;
}
.bpmn-logo text {
    font-family: Roboto, sans-serif;
    font-size: 42px;
    font-weight: 700;
    stroke: #404040;
    stroke-width: 0.8;
}
.task-side {
    width: 602px;
    padding: 32px;
    border-left: 2px solid #dde3de;
}
.task {
    height: 190px;
    padding: 28px;
    border: 2px solid #dde3de;
    border-radius: 28px;
}
.task-tag {
    display: flex;
    align-items: center;
    gap: 16px;
    height: 36px;
    font-size: 24px;
    font-weight: 600;
    letter-spacing: 0.027em;
    color: #176b4d;
}
.task-name {
    margin-top: 14px;
    font-size: 28px;
    line-height: 40px;
    font-weight: 600;
}
.task-who {
    margin-top: 4px;
    font-size: 24px;
    line-height: 36px;
    color: #5d6b63;
}
.task-actions {
    display: flex;
    flex-wrap: wrap;
    gap: 16px;
    margin-top: 32px;
}
.task-actions .primary {
    margin-right: 200px;
}
.tip {
    margin-top: 30px;
    font-size: 23px;
    line-height: 35px;
    color: #8a968f;
    text-align: center;
}

/* needs attention */
.attention {
    display: flex;
    flex-direction: column;
    overflow: hidden;
}
.att-head {
    height: 114px;
    display: flex;
    align-items: center;
    justify-content: space-between;
    padding: 0 40px;
    border-bottom: 2px solid #dde3de;
}
.att-list {
    flex: 1;
}
.att-row {
    display: flex;
    align-items: center;
    height: 123.4px;
    padding: 0 32px;
    border-bottom: 2px solid #dde3de;
}
.att-row:last-child {
    height: 121.4px;
    border-bottom: 0;
}
.att-icon {
    width: 72px;
    height: 72px;
    flex: none;
    display: flex;
    align-items: center;
    justify-content: center;
    border-radius: 20px;
    background: #fff3d9;
    color: #b87820;
}
.att-text {
    flex: 1;
    min-width: 0;
    margin: 0 24px;
}
.att-name {
    line-height: 38px;
    font-weight: 500;
    white-space: nowrap;
    overflow: hidden;
    text-overflow: ellipsis;
}
.att-sub {
    font-size: 23px;
    line-height: 36px;
    color: #8a968f;
}
.att-foot {
    height: 114px;
    display: flex;
    align-items: center;
    justify-content: space-between;
    padding: 0 48px;
    border-top: 2px solid #dde3de;
    font-weight: 500;
    color: #5d6b63;
}
.bottom {
    display: grid;
    grid-template-columns: 1488px 720px;
    gap: 48px;
    margin-top: 48px;
}
.chart-card {
    height: 500px;
    padding: 29px 40px;
}
```
